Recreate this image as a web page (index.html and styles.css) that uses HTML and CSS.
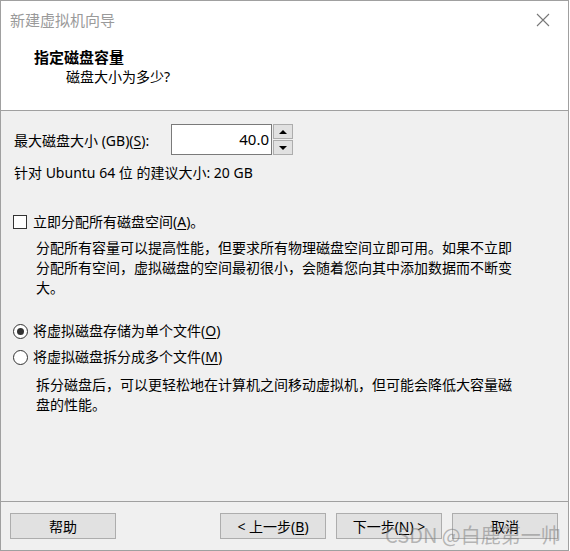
FILE: index.html
```html
<!DOCTYPE html>
<html lang="zh-CN">
<head>
<meta charset="utf-8">
<title>新建虚拟机向导</title>
<link rel="stylesheet" href="styles.css">
</head>
<body>
<div class="window">
  <div class="top">
    <div class="titlebar">
      <span class="title">新建虚拟机向导</span>
      <svg class="close" width="14" height="14" viewBox="0 0 14 14"><path d="M1 1L13 13M13 1L1 13" stroke="#777" stroke-width="1.1" fill="none"/></svg>
    </div>
    <div class="header">
      <div class="h-title">指定磁盘容量</div>
      <div class="h-sub">磁盘大小为多少?</div>
    </div>
  </div>
  <div class="content">
    <div class="size-row">
      <label class="size-label">最大磁盘大小 (GB)(<u>S</u>):</label>
      <div class="spin">
        <div class="spin-input">40.0</div>
        <div class="spin-btns">
          <div class="spin-btn"><span class="tri-up"></span></div>
          <div class="spin-btn"><span class="tri-down"></span></div>
        </div>
      </div>
    </div>
    <div class="line rec">针对 Ubuntu 64 位 的建议大小: 20 GB</div>
    <div class="opt check-row"><span class="checkbox"></span><span>立即分配所有磁盘空间(<u>A</u>)。</span></div>
    <div class="desc desc1">分配所有容量可以提高性能，但要求所有物理磁盘空间立即可用。如果不立即分配所有空间，虚拟磁盘的空间最初很小，会随着您向其中添加数据而不断变大。</div>
    <div class="opt radio-row r1"><span class="radio checked"></span><span>将虚拟磁盘存储为单个文件(<u>O</u>)</span></div>
    <div class="opt radio-row r2"><span class="radio"></span><span>将虚拟磁盘拆分成多个文件(<u>M</u>)</span></div>
    <div class="desc desc2">拆分磁盘后，可以更轻松地在计算机之间移动虚拟机，但可能会降低大容量磁盘的性能。</div>
  </div>
  <div class="footer">
    <button class="btn">帮助</button>
    <div class="spacer"></div>
    <button class="btn">&lt; 上一步(<u>B</u>)</button>
    <button class="btn">下一步(<u>N</u>) &gt;</button>
    <button class="btn">取消</button>
  </div>
  <div class="watermark">CSDN @白鹿第一帅</div>
</div>
</body>
</html>
```

FILE: styles.css
```css
* { box-sizing: border-box; }
html, body { margin: 0; padding: 0; }
body {
  width: 570px;
  height: 551px;
  background: #ffffff;
  font-family: "Noto Sans", "Noto Sans CJK SC", sans-serif;
  font-size: 14px;
  color: #000;
  overflow: hidden;
}
u { text-decoration: underline; text-underline-offset: 2px; }
.window {
  position: relative;
  width: 569px;
  height: 551px;
  border: 1px solid #a0a0a0;
  display: flex;
  flex-direction: column;
  background: #f0f0f0;
}
.top {
  background: #fff;
  height: 110px;
  border-bottom: 1px solid #a0a0a0;
  flex: none;
}
.titlebar {
  height: 37px;
  display: flex;
  align-items: center;
  padding-left: 9px;
  padding-right: 18px;
}
.title {
  font-size: 15px;
  color: #9a9a9a;
  font-family: "Noto Sans CJK SC", sans-serif;
  flex: 1;
}
.close { display: block; margin-top: 0; }
.header { padding-left: 33px; }
.h-title {
  font-weight: bold;
  font-size: 15px;
  line-height: 20px;
  margin-top: 9px;
}
.h-sub {
  padding-left: 32px;
  line-height: 20px;
  font-size: 14px;
}
.content {
  flex: 1;
  padding: 13px 12px 0 12px;
  display: flex;
  flex-direction: column;
}
.size-row { display: flex; align-items: center; height: 31px; }
.size-label { width: 158px; padding-left: 1px; }
.spin { display: flex; height: 31px; }
.spin-input {
  width: 101px;
  height: 31px;
  background: #fff;
  border: 1px solid #7a7a7a;
  text-align: right;
  padding-right: 2px;
  font-size: 15px;
  line-height: 28px;
}
.spin-btns { display: flex; flex-direction: column; margin-left: 1px; width: 20px; height: 31px; justify-content: space-between; }
.spin-btn {
  height: 15px;
  background: #e1e1e1;
  border: 1px solid #adadad;
  display: flex;
  align-items: center;
  justify-content: center;
}
.tri-up { width: 0; height: 0; border-left: 4px solid transparent; border-right: 4px solid transparent; border-bottom: 4px solid #000; }
.tri-down { width: 0; height: 0; border-left: 4px solid transparent; border-right: 4px solid transparent; border-top: 4px solid #000; }
.line { line-height: 20px; padding-left: 1px; }
.rec { margin-top: 8px; }
.opt { display: flex; align-items: center; line-height: 20px; height: 20px; gap: 6px; }
.check-row { margin-top: 29px; }
.checkbox { width: 14px; height: 14px; border: 1px solid #333; background: #fff; flex: none; }
.desc { padding-left: 23px; line-height: 20px; padding-right: 40px; }
.desc1 { margin-top: 6px; }
.r1 { margin-top: 23px; gap: 5px; }
.r2 { margin-top: 6px; gap: 5px; }
.radio { width: 15px; height: 15px; border-radius: 50%; border: 1px solid #333; background: #fff; flex: none; position: relative; }
.radio.checked::after {
  content: "";
  position: absolute;
  left: 3px; top: 3px;
  width: 7px; height: 7px;
  border-radius: 50%;
  background: #333;
}
.desc2 { margin-top: 8px; }
.footer {
  flex: none;
  height: 49px;
  border-top: 1px solid #a0a0a0;
  display: flex;
  align-items: flex-start;
  padding: 11px 10px 0 9px;
  gap: 10px;
}
.spacer { flex: 1; }
.btn {
  width: 106px;
  height: 26px;
  background: #e1e1e1;
  border: 1px solid #adadad;
  font-family: "Noto Sans", "Noto Sans CJK SC", sans-serif;
  font-size: 14px;
  color: #000;
  padding: 0;
}
.watermark {
  position: absolute;
  left: 384px;
  top: 519px;
  font-size: 20px;
  font-family: "Noto Sans CJK SC", sans-serif;
  color: rgba(120, 120, 120, 0.5);
  white-space: nowrap;
  pointer-events: none;
}
```
